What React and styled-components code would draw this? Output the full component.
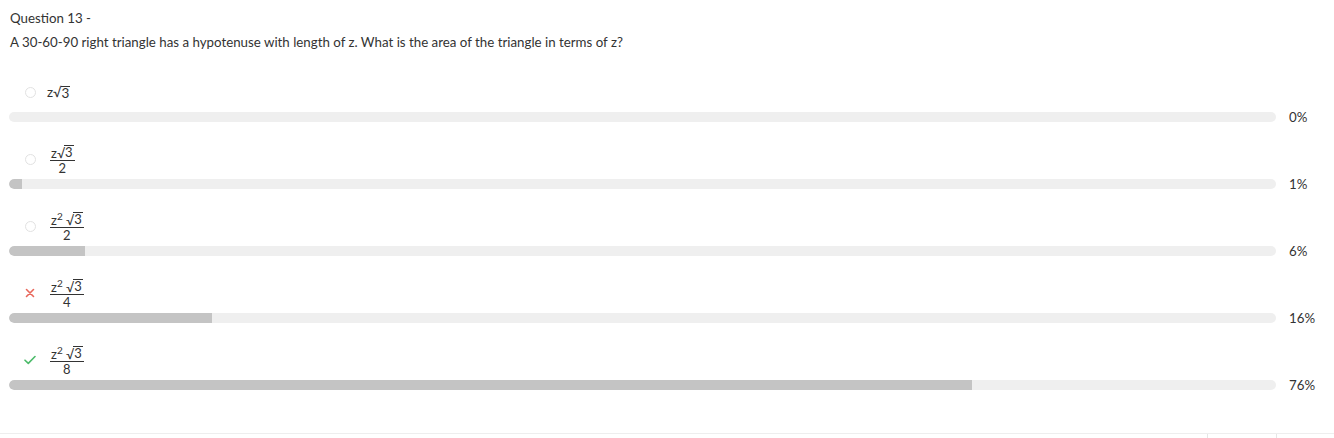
import React from 'react';
import styled, { createGlobalStyle } from 'styled-components';

const GlobalStyle = createGlobalStyle`
  body {
    margin: 0;
    background: #fff;
    font-family: Lato, "Open Sans", sans-serif;
    color: #333;
  }
`;

const options = [
  { squared: false, frac: null, pct: 0, state: 'none' },
  { squared: false, frac: '2', pct: 1, state: 'none' },
  { squared: true, frac: '2', pct: 6, state: 'none' },
  { squared: true, frac: '4', pct: 16, state: 'wrong' },
  { squared: true, frac: '8', pct: 76, state: 'right' },
];

const Sqrt = () => (
  <SqrtWrap>
    <SqrtSign>√</SqrtSign>
    <Radicand>3</Radicand>
  </SqrtWrap>
);

const Expr = ({ squared }) => (
  <span>
    z{squared && <Sup>2</Sup>}
    {squared && ' '}
    <Sqrt />
  </span>
);

const Marker = ({ state }) => {
  if (state === 'wrong') {
    return (
      <MarkerBox>
        <svg width="10" height="10" viewBox="0 0 10 10">
          <path d="M1.5 1.5 L8.5 8.5 M8.5 1.5 L1.5 8.5" stroke="#e8675b" strokeWidth="1.6" strokeLinecap="round" />
        </svg>
      </MarkerBox>
    );
  }
  if (state === 'right') {
    return (
      <MarkerBox>
        <svg width="12" height="10" viewBox="0 0 12 10">
          <path d="M1 5.2 L4.3 8.4 L11 1.5" stroke="#4cbb6a" strokeWidth="1.6" fill="none" strokeLinecap="round" strokeLinejoin="round" />
        </svg>
      </MarkerBox>
    );
  }
  return (
    <MarkerBox>
      <Radio />
    </MarkerBox>
  );
};

const App = () => (
  <Page>
    <GlobalStyle />
    <Title>Question 13 -</Title>
    <QuestionText>
      A 30-60-90 right triangle has a hypotenuse with length of z. What is the area of the triangle in terms of z?
    </QuestionText>
    <OptionList>
      {options.map((o, i) => (
        <Option key={i}>
          <LabelRow>
            <Marker state={o.state} />
            {o.frac ? (
              <Fraction>
                <Numer><Expr squared={o.squared} /></Numer>
                <Denom>{o.frac}</Denom>
              </Fraction>
            ) : (
              <Plain><Expr squared={o.squared} /></Plain>
            )}
          </LabelRow>
          <BarRow>
            <Track>
              <Fill $empty={o.pct === 0} style={{ width: `${o.pct}%` }} />
            </Track>
            <Percent>{o.pct}%</Percent>
          </BarRow>
        </Option>
      ))}
    </OptionList>
    <Footer>
      <FooterCell $grow />
      <FooterCell $w={68} />
      <FooterCell $w={57} />
    </Footer>
  </Page>
);

const Page = styled.div`
  width: 1334px;
  height: 438px;
  overflow: hidden;
  display: flex;
  flex-direction: column;
`;

const Title = styled.div`
  font-size: 13.3px;
  line-height: 16px;
  padding: 10px 0 0 10px;
  color: #333;
`;

const QuestionText = styled.div`
  font-size: 13.3px;
  line-height: 16px;
  padding: 8px 0 0 10px;
  color: #333;
`;

const OptionList = styled.div`
  display: flex;
  flex-direction: column;
  padding-top: 28px;
`;

const Option = styled.div`
  display: flex;
  flex-direction: column;
  height: 67px;
`;

const LabelRow = styled.div`
  height: 28px;
  display: flex;
  align-items: center;
  padding-left: 24px;
  margin-bottom: 6px;
`;

const MarkerBox = styled.div`
  width: 12px;
  height: 12px;
  display: flex;
  align-items: center;
  justify-content: center;
  margin-right: 11px;
`;

const Radio = styled.span`
  width: 9px;
  height: 9px;
  border-radius: 50%;
  border: 1px solid #e2e2e2;
`;

const Plain = styled.span`
  font-size: 13.5px;
  color: #333;
`;

const Fraction = styled.span`
  display: inline-flex;
  flex-direction: column;
  align-items: center;
  margin-left: 3px;
  font-size: 13px;
  line-height: 12px;
  color: #333;
`;

const Numer = styled.span`
  padding: 0 1px 1px;
  border-bottom: 1px solid #333;
  white-space: nowrap;
`;

const Denom = styled.span`
  padding-top: 1px;
`;

const Sup = styled.sup`
  font-size: 10px;
  line-height: 0;
  vertical-align: 5px;
`;

const SqrtWrap = styled.span`
  display: inline-flex;
  align-items: flex-end;
`;

const SqrtSign = styled.span`
  margin-right: -1px;
`;

const Radicand = styled.span`
  border-top: 1px solid #333;
  padding: 0 1px;
  line-height: 1;
`;

const BarRow = styled.div`
  display: flex;
  align-items: center;
  height: 10px;
  padding-left: 9px;
`;

const Track = styled.div`
  width: 1267px;
  height: 10px;
  border-radius: 5px;
  background: #efefef;
  overflow: hidden;
`;

const Fill = styled.div`
  height: 100%;
  min-width: ${(p) => (p.$empty ? '0' : '13px')};
  background: #c4c4c4;
  border-radius: 5px 0 0 5px;
`;

const Percent = styled.div`
  padding-left: 13px;
  font-size: 13.3px;
  color: #333;
`;

const Footer = styled.div`
  margin-top: auto;
  height: 4px;
  border-top: 1px solid #eee;
  display: flex;
`;

const FooterCell = styled.div`
  ${(p) => (p.$grow ? 'flex: 1;' : `width: ${p.$w}px;`)}
  border-right: 1px solid #e6e6e6;
  &:last-child { border-right: none; }
`;

export default App;
